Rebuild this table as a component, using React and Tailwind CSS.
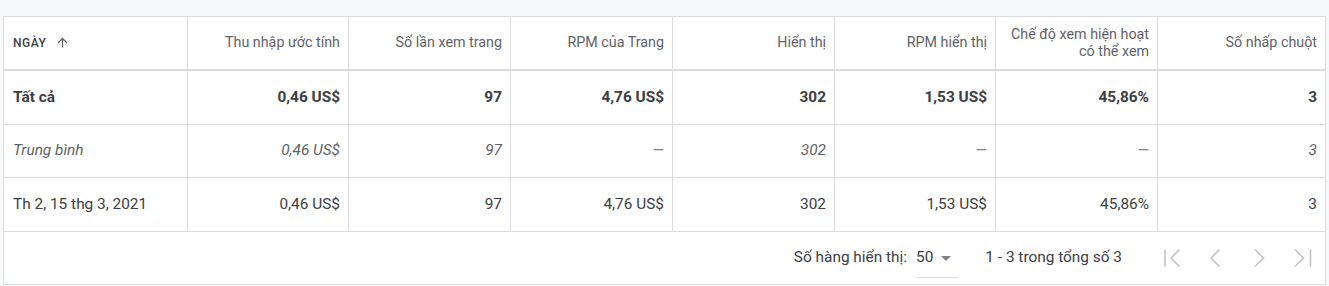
import React from 'react'

const cols = 'grid grid-cols-[184px_161px_162px_162px_162px_161px_162px_1fr]'
const cell = 'flex items-center justify-end px-2 border-r border-[#dadce0] last:border-r-0'

const headers = [
  'Thu nhập ước tính',
  'Số lần xem trang',
  'RPM của Trang',
  'Hiển thị',
  'RPM hiển thị',
  null,
  'Số nhấp chuột',
]

const rows = [
  { label: 'Tất cả', kind: 'total', h: 'h-[54px]', values: ['0,46 US$', '97', '4,76 US$', '302', '1,53 US$', '45,86%', '3'] },
  { label: 'Trung bình', kind: 'avg', h: 'h-[53px]', values: ['0,46 US$', '97', '—', '302', '—', '—', '3'] },
  { label: 'Th 2, 15 thg 3, 2021', kind: 'day', h: 'h-[54px]', values: ['0,46 US$', '97', '4,76 US$', '302', '1,53 US$', '45,86%', '3'] },
]

function Chevron({ d }) {
  return (
    <svg width="24" height="24" viewBox="0 0 24 24" fill="none" stroke="#c2c2c2" strokeWidth="1.6" strokeLinecap="butt" strokeLinejoin="miter">
      <path d={d} />
    </svg>
  )
}

export default function App() {
  return (
    <div className="min-h-screen bg-[#f8f9fa] pt-[16px] pl-[3px] font-['Roboto',_'Liberation_Sans',_sans-serif]">
      <div className="w-[1323px] border border-[#dadce0] bg-white">
        {/* header */}
        <div className={`${cols} h-[54px] border-b-2 border-[#dadce0] text-[14.3px] text-[#5f6368]`}>
          <div className="flex items-center px-2 border-r border-[#dadce0] pl-[9px]">
            <span className="text-[12px] font-medium tracking-[0.5px] text-[#3c4043]">NGÀY</span>
            <svg className="ml-[9px] mt-[-2px]" width="15" height="15" viewBox="0 0 24 24" fill="#5f6368">
              <path d="M4 12l1.41 1.41L11 7.83V20h2V7.83l5.58 5.59L20 12l-8-8-8 8z" />
            </svg>
          </div>
          {headers.map((h, i) => (
            <div key={i} className={cell}>
              {h ?? (
                <span className="text-right leading-[17px]">
                  Chế độ xem hiện hoạt
                  <br />
                  có thể xem
                </span>
              )}
            </div>
          ))}
        </div>

        {/* rows */}
        {rows.map((r) => {
          const tone =
            r.kind === 'total'
              ? 'font-bold text-[#3c4043]'
              : r.kind === 'avg'
              ? 'italic text-[#5f6368]'
              : 'text-[#3c4043]'
          return (
            <div key={r.label} className={`${cols} ${r.h} border-b border-[#dadce0] text-[15.4px] ${tone}`}>
              <div className="flex items-center pl-[9px] pr-2 border-r border-[#dadce0]">{r.label}</div>
              {r.values.map((v, i) => (
                <div key={i} className={`${cell} ${v === '—' ? 'text-[#80868b]' : ''}`}>
                  {v}
                </div>
              ))}
            </div>
          )
        })}

        {/* footer */}
        <div className="flex h-[52px] items-center justify-end pr-[10px] text-[15.4px] text-[#3c4043]">
          <span>Số hàng hiển thị:</span>
          <div className="relative ml-[9px] flex h-full items-center">
            <span>50</span>
            <svg className="ml-[1px]" width="24" height="24" viewBox="0 0 24 24" fill="#80868b">
              <path d="M7 10l5 5 5-5z" />
            </svg>
            <div className="absolute bottom-[6px] left-0 right-0 border-b border-[#dadce0]" />
          </div>
          <span className="ml-[27px]">1 - 3 trong tổng số 3</span>
          <div className="ml-[37px] flex items-center gap-[20px]">
            <Chevron d="M6 3.5v17 M20.5 3.5L12 12l8.5 8.5" />
            <Chevron d="M16.5 3.5L8 12l8.5 8.5" />
            <Chevron d="M8 3.5L16.5 12L8 20.5" />
            <Chevron d="M4 3.5L12.5 12L4 20.5 M19.5 3.5v17" />
          </div>
        </div>
      </div>
    </div>
  )
}
